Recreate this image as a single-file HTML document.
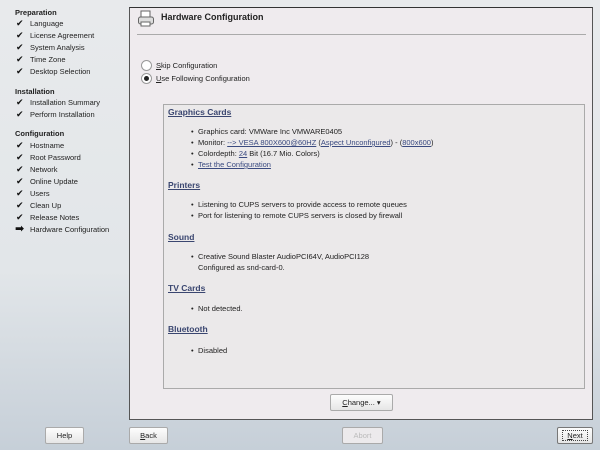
<!DOCTYPE html>
<html><head><style>
body{margin:0;width:600px;height:450px;overflow:hidden;background:linear-gradient(#e8eaec,#e2e6e9 60%,#c6cfd8);font-family:"Liberation Sans","DejaVu Sans",sans-serif;font-size:7.5px;color:#222;position:relative}
.a{position:absolute;white-space:nowrap}
.h{font-weight:bold;font-size:7.5px;color:#222}
.ck{position:absolute;left:16px;font-size:9px;font-weight:bold;color:#111}
.it{left:30px}
#panel{position:absolute;left:129px;top:7px;width:462px;height:411px;background:#efebee;border:1px solid #555;border-top-color:#333}
#box{position:absolute;left:163px;top:104px;width:420px;height:283px;background:#ebe9ea;border:1px solid #aaa}
.sh{color:#3a4670;font-weight:bold;text-decoration:underline;font-size:8.5px}
.b{color:#222}
.b:before{content:"•";position:absolute;left:-7px}
u.l{color:#3a4a80}
.btn{position:absolute;height:15px;background:linear-gradient(#fdfdfd,#e6e6e6);border:1px solid #aaa;border-radius:2px;text-align:center;line-height:15px;font-size:7.5px}
</style></head><body>
<div class="a h" style="left:15px;top:8px">Preparation</div>
<div class="ck" style="top:18px">✔</div><div class="a it" style="top:19px">Language</div>
<div class="ck" style="top:30px">✔</div><div class="a it" style="top:31px">License Agreement</div>
<div class="ck" style="top:42px">✔</div><div class="a it" style="top:43px">System Analysis</div>
<div class="ck" style="top:54px">✔</div><div class="a it" style="top:55px">Time Zone</div>
<div class="ck" style="top:66px">✔</div><div class="a it" style="top:67px">Desktop Selection</div>
<div class="a h" style="left:15px;top:87px">Installation</div>
<div class="ck" style="top:97px">✔</div><div class="a it" style="top:98px">Installation Summary</div>
<div class="ck" style="top:109px">✔</div><div class="a it" style="top:110px">Perform Installation</div>
<div class="a h" style="left:15px;top:129px">Configuration</div>
<div class="ck" style="top:140px">✔</div><div class="a it" style="top:141px">Hostname</div>
<div class="ck" style="top:152px">✔</div><div class="a it" style="top:153px">Root Password</div>
<div class="ck" style="top:164px">✔</div><div class="a it" style="top:165px">Network</div>
<div class="ck" style="top:176px">✔</div><div class="a it" style="top:177px">Online Update</div>
<div class="ck" style="top:188px">✔</div><div class="a it" style="top:189px">Users</div>
<div class="ck" style="top:200px">✔</div><div class="a it" style="top:201px">Clean Up</div>
<div class="ck" style="top:212px">✔</div><div class="a it" style="top:213px">Release Notes</div>
<div class="ck" style="top:222px;left:15px;font-size:11px">➡</div><div class="a it" style="top:225px">Hardware Configuration</div>

<div id="panel"></div>
<svg class="a" style="left:137px;top:10px" width="18" height="18" viewBox="0 0 18 18"><rect x="4" y="1" width="9" height="6" fill="#fff" stroke="#666" stroke-width="1"/><rect x="1.5" y="7" width="15" height="7" rx="2" fill="#ddd" stroke="#666"/><rect x="4" y="12" width="9" height="4" fill="#fff" stroke="#666"/></svg>
<div class="a" style="left:161px;top:12px;font-weight:bold;font-size:9px">Hardware Configuration</div>
<div class="a" style="left:137px;top:34px;width:449px;height:1px;background:#aaa"></div>
<div class="a" style="left:141px;top:60px;width:9px;height:9px;border:1px solid #999;border-radius:50%;background:#fff"></div>
<div class="a" style="left:156px;top:61px"><u>S</u>kip Configuration</div>
<div class="a" style="left:141px;top:73px;width:9px;height:9px;border:1px solid #999;border-radius:50%;background:#fff"></div>
<div class="a" style="left:144px;top:76px;width:5px;height:5px;border-radius:50%;background:#222"></div>
<div class="a" style="left:156px;top:74px"><u>U</u>se Following Configuration</div>

<div id="box"></div>
<div class="a sh" style="left:168px;top:107px">Graphics Cards</div>
<div class="a b" style="left:198px;top:127px">Graphics card: VMWare Inc VMWARE0405</div>
<div class="a b" style="left:198px;top:138px">Monitor: <u class="l">--&gt; VESA 800X600@60HZ</u> (<u class="l">Aspect Unconfigured</u>) - (<u class="l">800x600</u>)</div>
<div class="a b" style="left:198px;top:149px">Colordepth: <u class="l">24</u> Bit (16.7 Mio. Colors)</div>
<div class="a b" style="left:198px;top:160px"><u class="l">Test the Configuration</u></div>
<div class="a sh" style="left:168px;top:180px">Printers</div>
<div class="a b" style="left:198px;top:200px">Listening to CUPS servers to provide access to remote queues</div>
<div class="a b" style="left:198px;top:211px">Port for listening to remote CUPS servers is closed by firewall</div>
<div class="a sh" style="left:168px;top:232px">Sound</div>
<div class="a b" style="left:198px;top:252px">Creative Sound Blaster AudioPCI64V, AudioPCI128</div>
<div class="a" style="left:198px;top:263px">Configured as snd-card-0.</div>
<div class="a sh" style="left:168px;top:283px">TV Cards</div>
<div class="a b" style="left:198px;top:304px">Not detected.</div>
<div class="a sh" style="left:168px;top:324px">Bluetooth</div>
<div class="a b" style="left:198px;top:346px">Disabled</div>

<div class="btn" style="left:330px;top:394px;width:61px"><u>C</u>hange... ▾</div>
<div class="btn" style="left:45px;top:427px;width:37px">Help</div>
<div class="btn" style="left:129px;top:427px;width:37px"><u>B</u>ack</div>
<div class="btn" style="left:342px;top:427px;width:39px;color:#bbb;background:#eceaec">Abort</div>
<div class="btn" style="left:557px;top:427px;width:34px;border-color:#777"><span style="border:1px dotted #444;padding:0 4px"><u>N</u>ext</span></div>
</body></html>
